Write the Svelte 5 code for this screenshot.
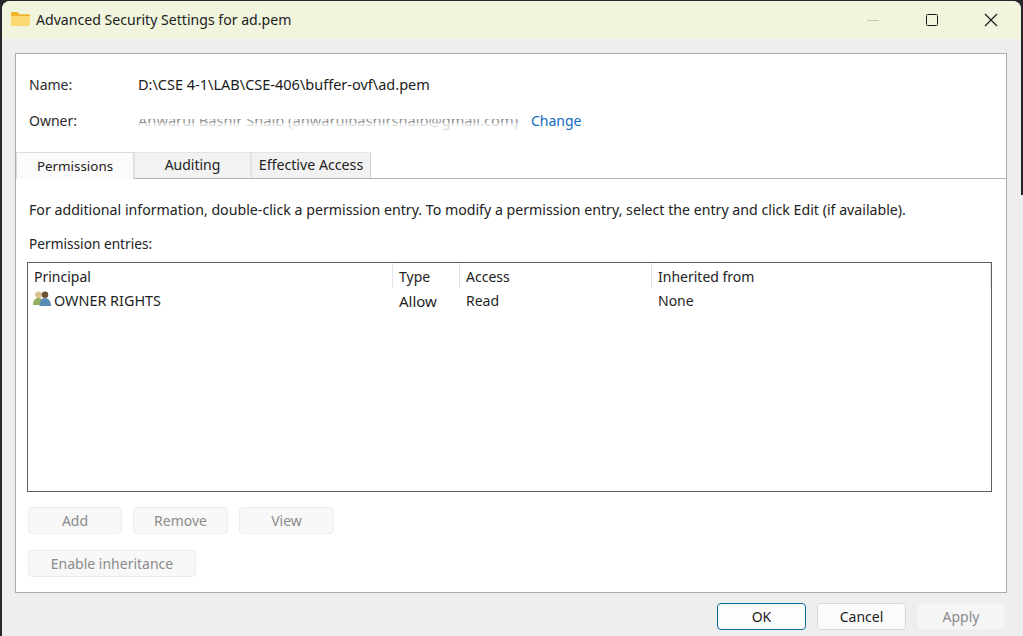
<script>
  const columns = [
    { label: 'Principal', width: 365 },
    { label: 'Type', width: 67 },
    { label: 'Access', width: 192 },
    { label: 'Inherited from', width: 339 }
  ];
</script>

<div class="desktop">
  <div class="window">
    <header class="titlebar">
      <svg class="folder" width="19" height="14" viewBox="0 0 19 14" aria-hidden="true">
        <path d="M0 1.500C0 .7.6 0 1.400 0h5l2 2.200h9.200c.8 0 1.400.6 1.400 1.400V5H0z" fill="#f0b429" />
        <path d="M0 4h19v8.600c0 .8-.6 1.400-1.400 1.400H1.400C.6 14 0 13.400 0 12.600z" fill="#fbd872" />
      </svg>
      <span class="title">Advanced Security Settings for ad.pem</span>
      <div class="controls">
        <span class="ctl"><span class="min"></span></span>
        <span class="ctl"><span class="max"></span></span>
        <span class="ctl">
          <svg width="14" height="14" viewBox="0 0 14 14" aria-hidden="true">
            <path d="M1 1l12 12M13 1L1 13" stroke="#1c1c1c" stroke-width="1.200" fill="none" />
          </svg>
        </span>
      </div>
    </header>

    <main class="panel">
      <div class="info">
        <div class="row name-row"><span class="key">Name:</span><span class="path">D:\CSE 4-1\LAB\CSE-406\buffer-ovf\ad.pem</span></div>
        <div class="row owner-row">
          <span class="key">Owner:</span>
          <span class="owner">Anwarul Bashir Shaib (anwarulbashirshaib@gmail.com)<i class="redact"></i></span>
          <span class="link">Change</span>
        </div>
      </div>

      <nav class="tabs">
        <span class="tab active">Permissions</span>
        <span class="tab auditing">Auditing</span>
        <span class="tab effective">Effective Access</span>
      </nav>

      <div class="content">
        <p class="hint">For additional information, double-click a permission entry. To modify a permission entry, select the entry and click Edit (if available).</p>
        <p class="entries-label">Permission entries:</p>

        <div class="list">
          <div class="list-head">
            {#each columns as c}
              <span class="col" style="width:{c.width}px">{c.label}</span>
            {/each}
          </div>
          <div class="list-row">
            <span class="cell" style="width:{columns[0].width}px">
              <svg class="people" width="18" height="15" viewBox="0 0 18 15" aria-hidden="true">
                <circle cx="5.500" cy="3.800" r="3.300" fill="#d8c488" />
                <path d="M0 14c0-4.500 2-7 5.500-7S11 9.500 11 14z" fill="#93b061" />
                <circle cx="12" cy="3.800" r="3.300" fill="#6e5238" />
                <path d="M6.500 15c0-5 2-8 5.500-8s6 3 6 8z" fill="#5a8cb6" />
              </svg>
              <span class="rights">OWNER RIGHTS</span>
            </span>
            <span class="cell" style="width:{columns[1].width}px"><span class="allow">Allow</span></span>
            <span class="cell" style="width:{columns[2].width}px">Read</span>
            <span class="cell" style="width:{columns[3].width}px">None</span>
          </div>
        </div>

        <div class="actions">
          <button class="btn off add" disabled>Add</button>
          <button class="btn off remove" disabled>Remove</button>
          <button class="btn off view" disabled>View</button>
        </div>
        <button class="btn off enable" disabled>Enable inheritance</button>
      </div>
    </main>

    <footer class="footer">
      <button class="btn primary">OK</button>
      <button class="btn">Cancel</button>
      <button class="btn off apply" disabled>Apply</button>
    </footer>
  </div>
</div>

<style>
  :global(body) {
    margin: 0;
    background: #26262b;
  }
  .desktop {
    width: 1023px;
    height: 636px;
    padding: 1px 2px 0 2px;
    box-sizing: border-box;
    overflow: hidden;
    font-family: "Noto Sans", "Open Sans", sans-serif;
    font-size: 14px;
    color: #1b1b1b;
    background:
      linear-gradient(#26262b 0 195px, #ececec 195px) right / 2px 100% no-repeat,
      #26262b;
  }
  .window {
    height: 640px;
    background: #eeeeef;
    border-radius: 8px 8px 0 0;
    overflow: hidden;
  }
  .titlebar {
    height: 38px;
    background: #f1f5de;
    display: flex;
    align-items: center;
    padding-left: 9px;
    box-sizing: border-box;
  }
  .folder { margin-right: 6px; margin-top: -3px; }
  .title { font-size: 14.100px; margin-top: -1px; color: #222; }
  .controls {
    margin-left: auto;
    display: flex;
    margin-right: 1px;
  }
  .ctl {
    width: 59px;
    height: 38px;
    display: flex;
    align-items: center;
    justify-content: center;
  }
  .min { width: 12px; height: 1px; background: #c6c9b8; }
  .max { width: 10px; height: 10px; border: 1.200px solid #1c1c1c; border-radius: 1.500px; }

  .panel {
    margin: 14px 0 0 13px;
    width: 992px;
    height: 540px;
    box-sizing: border-box;
    background: #fff;
    border: 1px solid #ababab;
    display: flex;
    flex-direction: column;
  }
  .info { padding: 20px 0 0 13px; height: 98px; box-sizing: border-box; }
  .row { display: flex; align-items: center; height: 20px; }
  .owner-row { margin-top: 16px; }
  .key { width: 109px; color: #2a2a2a; }
  .path { font-size: 14.500px; }
  .owner { position: relative; color: #333; white-space: nowrap; width: 380px; font-size: 14.650px; }
  .redact {
    position: absolute;
    left: -2px;
    right: -2px;
    top: 0;
    height: 20px;
    background: linear-gradient(#fff 0 9px, rgba(255,255,255,.45) 9px 13px, rgba(255,255,255,.8) 13px 20px);
  }
  .link { margin-left: 13px; color: #0f6cbd; }
  .tabs {
    display: flex;
    height: 26px;
    border-bottom: 1px solid #b5b5b5;
    align-items: flex-start;
    flex: none;
  }
  .tab {
    height: 26px;
    padding-bottom: 3px;
    box-sizing: border-box;
    display: flex;
    align-items: center;
    justify-content: center;
    background: #f2f2f2;
    border: 1px solid #e3e3e3;
    border-bottom: 0;
    color: #222;
  }
  .active {
    width: 118px;
    height: 27px;
    padding-top: 0;
    padding-bottom: 0;
    font-size: 13.400px;
    background: #fbfbfb;
    border-color: #dcdcdc;
    position: relative;
    z-index: 1;
  }
  .auditing { width: 117px; }
  .effective { width: 120px; border-right-color: #d5d5d5; font-size: 14.200px; }

  .content { padding: 0 0 0 11px; }
  .hint { margin: 21px 0 0 2px; line-height: 20px; font-size: 14.180px; color: #222; white-space: nowrap; }
  .entries-label { margin: 14px 0 0 2px; line-height: 20px; font-size: 13.700px; color: #222; }
  .list {
    margin-top: 8px;
    width: 965px;
    height: 230px;
    box-sizing: border-box;
    border: 1px solid #5f5f5f;
    background: #fff;
  }
  .list-head { display: flex; height: 25px; }
  .col {
    box-sizing: border-box;
    padding: 4px 0 0 6px;
    border-right: 1px solid #e5e5e5;
    line-height: 20px;
    color: #222;
  }
  .list-row { display: flex; height: 24px; align-items: center; padding-top: 1px; box-sizing: border-box; }
  .cell { box-sizing: border-box; padding-left: 6px; display: flex; align-items: center; color: #1f1f1f; }
  .rights { font-size: 14.400px; }
  .allow { font-size: 15px; }
  .people { margin-left: -1px; margin-right: 3px; margin-top: -4px; }

  .actions { display: flex; gap: 11px; margin: 15px 0 0 1px; }
  .btn {
    font: inherit;
    width: 89px;
    height: 27px;
    padding: 0 0 1px;
    box-sizing: border-box;
    border: 1px solid #d8d8d8;
    border-radius: 4px;
    background: #fbfbfb;
    color: #1b1b1b;
  }
  .off {
    background: #f8f8f8;
    border-color: #ececec;
    color: #8b8b8b;
  }
  .add { width: 94px; }
  .remove { width: 95px; }
  .view { width: 95px; }
  .enable { width: 168px; margin: 16px 0 0 1px; display: block; }

  .footer {
    display: flex;
    gap: 11px;
    margin: 10px 0 0 715px;
  }
  .primary { border-color: #0f6a9e; background: #fdfdfd; }
  .apply { background: #f5f5f5; border-color: #f0f0f0; width: 88px; }
</style>
